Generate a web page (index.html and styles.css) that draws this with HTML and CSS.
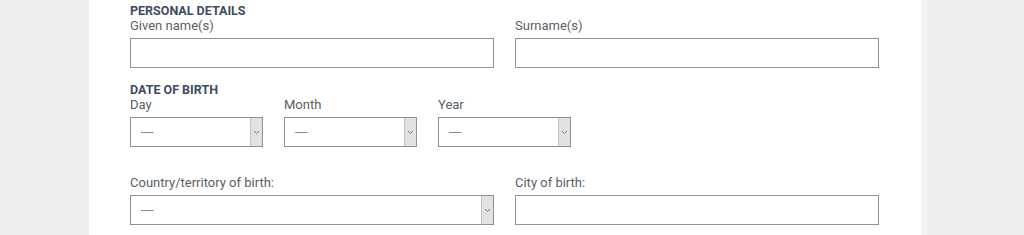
FILE: index.html
```html
<!DOCTYPE html>
<html>
<head>
<meta charset="utf-8">
<link rel="stylesheet" href="styles.css">
</head>
<body>
<div class="page">
  <div class="panel">
    <h2 class="section">PERSONAL DETAILS</h2>
    <div class="row two">
      <div class="field">
        <label class="lbl">Given name(s)</label>
        <div class="input"></div>
      </div>
      <div class="field">
        <label class="lbl">Surname(s)</label>
        <div class="input"></div>
      </div>
    </div>

    <h2 class="section dob">DATE OF BIRTH</h2>
    <div class="row three">
      <div class="field small">
        <label class="lbl">Day</label>
        <div class="select"><span class="val">-----</span><span class="arrow"><svg width="7" height="5" viewBox="0 0 7 5"><path d="M1 1 L3.5 3.5 L6 1" fill="none" stroke="#777" stroke-width="1"/></svg></span></div>
      </div>
      <div class="field small">
        <label class="lbl">Month</label>
        <div class="select"><span class="val">-----</span><span class="arrow"><svg width="7" height="5" viewBox="0 0 7 5"><path d="M1 1 L3.5 3.5 L6 1" fill="none" stroke="#777" stroke-width="1"/></svg></span></div>
      </div>
      <div class="field small">
        <label class="lbl">Year</label>
        <div class="select"><span class="val">-----</span><span class="arrow"><svg width="7" height="5" viewBox="0 0 7 5"><path d="M1 1 L3.5 3.5 L6 1" fill="none" stroke="#777" stroke-width="1"/></svg></span></div>
      </div>
    </div>

    <div class="row two birth">
      <div class="field">
        <label class="lbl">Country/territory of birth:</label>
        <div class="select"><span class="val">-----</span><span class="arrow"><svg width="7" height="5" viewBox="0 0 7 5"><path d="M1 1 L3.5 3.5 L6 1" fill="none" stroke="#777" stroke-width="1"/></svg></span></div>
      </div>
      <div class="field">
        <label class="lbl">City of birth:</label>
        <div class="input"></div>
      </div>
    </div>
  </div>
</div>
</body>
</html>
```

FILE: styles.css
```css
html, body {
  margin: 0;
  padding: 0;
  background: #eeeeee;
  font-family: Roboto, "Liberation Sans", sans-serif;
  font-size: 13px;
  color: #555b63;
}
.page {
  display: flex;
  height: 235px;
  overflow: hidden;
}
.panel {
  margin-left: 89px;
  width: 791px;
  background: #ffffff;
  padding: 3px 0 0 41px;
  border-right: 6px solid #f4f4f4;
}
.section {
  margin: 0;
  font-size: 12.5px;
  font-weight: 700;
  line-height: 15px;
  color: #3e4b5f;
}
.section.dob {
  margin-top: 14px;
}
.row {
  display: flex;
  gap: 21px;
}
.row.birth {
  margin-top: 28px;
}
.field {
  display: flex;
  flex-direction: column;
  width: 364px;
}
.field.small {
  width: 133px;
}
.lbl {
  line-height: 15px;
  margin-bottom: 5px;
  color: #5a5f66;
}
.input {
  box-sizing: border-box;
  height: 30px;
  border: 1px solid #8a929b;
  background: #fff;
}
.select {
  box-sizing: border-box;
  height: 30px;
  border: 1px solid #8a929b;
  background: #fff;
  display: flex;
  align-items: center;
}
.select .val {
  flex: 1;
  padding-left: 10px;
  font-size: 9px;
  letter-spacing: 0;
  color: #444;
}
.select .arrow {
  width: 11px;
  align-self: stretch;
  background: #e2e2e2;
  border-left: 1px solid #c4c4c4;
  display: flex;
  align-items: center;
  justify-content: center;
}
```
